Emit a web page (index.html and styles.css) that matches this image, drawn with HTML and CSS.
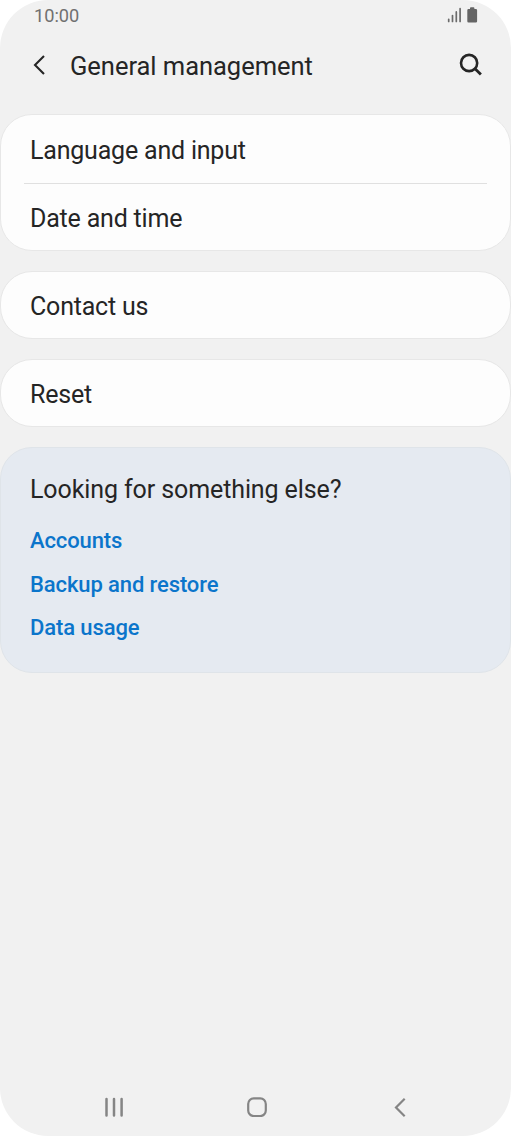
FILE: index.html
```html
<!DOCTYPE html>
<html lang="en">
<head>
<meta charset="utf-8">
<title>General management</title>
<link rel="stylesheet" href="styles.css">
</head>
<body>
<div class="phone">
  <div class="status">
    <span class="clock">10:00</span>
    <svg class="status-icons" width="32" height="18" viewBox="0 0 32 18">
      <path d="M1.700 12.300v2.200M5.500 8.600v5.900M9.300 4.900v9.600M13.100 1.700v12.800" stroke="#6b6b6b" stroke-width="1.700" stroke-linecap="round" fill="none"/>
      <path d="M21.500 2h1.500V1.200q0-.9.900-.9h2.600q.9 0 .9.900V2h1.500q1.200 0 1.200 1.200v11q0 1.200-1.200 1.200h-7.400q-1.200 0-1.200-1.200v-11q0-1.200 1.200-1.200z" fill="#656565"/>
    </svg>
  </div>
  <header class="header">
    <svg class="back" width="14" height="22" viewBox="0 0 14 22"><path d="M12 2L3 11l9 9" fill="none" stroke="#252525" stroke-width="2.100"/></svg>
    <h1 class="title">General management</h1>
    <svg class="search" width="24" height="24" viewBox="0 0 24 24"><circle cx="10.100" cy="10" r="8.100" fill="none" stroke="#252525" stroke-width="2.600"/><path d="M15.800 15.600l6.100 6" stroke="#252525" stroke-width="2.800"/></svg>
  </header>
  <main class="groups">
    <section class="card">
      <div class="row row-first">Language and input</div>
      <div class="divider"></div>
      <div class="row">Date and time</div>
    </section>
    <section class="card"><div class="row">Contact us</div></section>
    <section class="card"><div class="row">Reset</div></section>
    <section class="card related">
      <h2 class="related-title">Looking for something else?</h2>
      <a class="link">Accounts</a>
      <a class="link">Backup and restore</a>
      <a class="link">Data usage</a>
    </section>
  </main>
  <nav class="nav">
    <svg width="20" height="20" viewBox="0 0 20 20"><path d="M2.500 2v16.500M10 2v16.500M17.600 2v16.500" stroke="#858585" stroke-width="2.500" stroke-linecap="round"/></svg>
    <svg width="20" height="20" viewBox="0 0 20 20"><rect x="1.200" y="1.400" width="17.600" height="17.600" rx="5.500" fill="none" stroke="#858585" stroke-width="2.200"/></svg>
    <svg width="20" height="20" viewBox="0 0 20 20"><path d="M14.700 1.800L6 10.500l8.700 8.700" fill="none" stroke="#858585" stroke-width="2.200"/></svg>
  </nav>
</div>
</body>
</html>
```
FILE: styles.css
```css
* { box-sizing: border-box; }
body { margin: 0; background: #fff; font-family: Roboto, sans-serif; color: #252525; }
.phone { width: 511px; height: 1136px; background: #f1f1f1; border-radius: 48px; display: flex; flex-direction: column; overflow: hidden; }
.status { height: 32px; padding: 0 32px 0 34px; display: flex; align-items: center; justify-content: space-between; }
.clock { font-size: 18.2px; line-height: 20px; color: #707070; }
.header { height: 66px; padding: 0 28px 0 32px; display: flex; align-items: center; }
.title { margin: 2px auto 0 24px; font-size: 25.500px; letter-spacing: -0.030px; font-weight: 400; }
.groups { display: flex; flex-direction: column; gap: 20px; padding-top: 16px; }
.card { background: #fdfdfd; border: 1px solid #e7e7e7; border-radius: 32px; }
.row { height: 66px; padding: 3px 29px 0; display: flex; align-items: center; font-size: 25px; letter-spacing: -0.200px; }
.row-first { height: 68px; padding-top: 2px; }
.divider { height: 1px; margin: 0 23px; background: #e0e0e0; }
.related { height: 226px; background: #e5eaf1; border-color: #dfe4e9; padding: 24px 29px; display: flex; flex-direction: column; }
.related-title { margin: 0 0 11px; font-size: 25px; letter-spacing: -0.100px; line-height: 36px; font-weight: 400; }
.link { font-size: 22px; letter-spacing: -0.110px; line-height: 43.500px; font-weight: 500; color: #0b75cb; }
.nav { margin-top: auto; height: 58px; padding: 0 101px 0 104px; display: flex; align-items: center; justify-content: space-between; }
```
